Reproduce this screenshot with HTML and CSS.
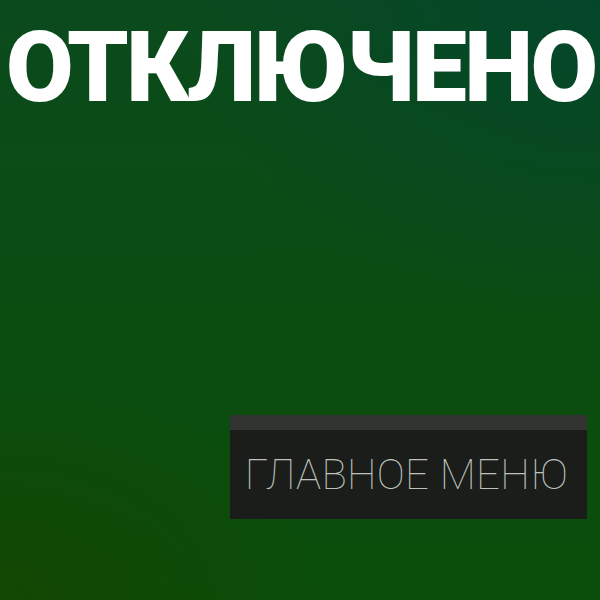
FILE: index.html
```html
<!DOCTYPE html>
<html lang="ru">
<head>
<meta charset="utf-8">
<title>Отключено</title>
<link rel="stylesheet" href="styles.css">
</head>
<body>
<main class="screen">
  <h1 class="title">ОТКЛЮЧЕНО</h1>
  <div class="actions">
    <button class="menu-btn" type="button"><span class="menu-label">ГЛАВНОЕ МЕНЮ</span></button>
  </div>
</main>
</body>
</html>
```
FILE: styles.css
```css
html, body {
  margin: 0;
  padding: 0;
  width: 600px;
  height: 600px;
  overflow: hidden;
}
.screen {
  width: 600px;
  height: 600px;
  box-sizing: border-box;
  display: flex;
  flex-direction: column;
  background:
    radial-gradient(ellipse 420px 320px at 600px 0px, rgba(4, 70, 45, 0.9), rgba(4, 70, 45, 0) 100%),
    radial-gradient(ellipse 320px 220px at 0px 600px, rgba(20, 70, 2, 0.9), rgba(20, 70, 2, 0) 100%),
    linear-gradient(180deg, #0b4a1d 0%, #0a4d10 55%, #0b4d0a 100%);
}
.title {
  margin: 28px 0 0 6px;
  font-family: Roboto, "Liberation Sans", sans-serif;
  font-weight: 900;
  font-size: 98px;
  line-height: 80px;
  color: #ffffff;
  letter-spacing: -2.6px;
  white-space: nowrap;
}
.actions {
  margin-top: auto;
  margin-bottom: 81px;
  display: flex;
  justify-content: flex-end;
  padding-right: 13px;
}
.menu-btn {
  width: 357px;
  height: 104px;
  box-sizing: border-box;
  border: 0;
  border-top: 15px solid #323432;
  background: #1a1d1a;
  padding: 0 0 0 15px;
  margin: 0;
  display: flex;
  align-items: center;
  cursor: pointer;
}
.menu-label {
  font-family: Roboto, "Liberation Sans", sans-serif;
  font-weight: 100;
  font-size: 42px;
  line-height: 1;
  letter-spacing: 0.3px;
  color: #bfc1bd;
  white-space: nowrap;
}
```
